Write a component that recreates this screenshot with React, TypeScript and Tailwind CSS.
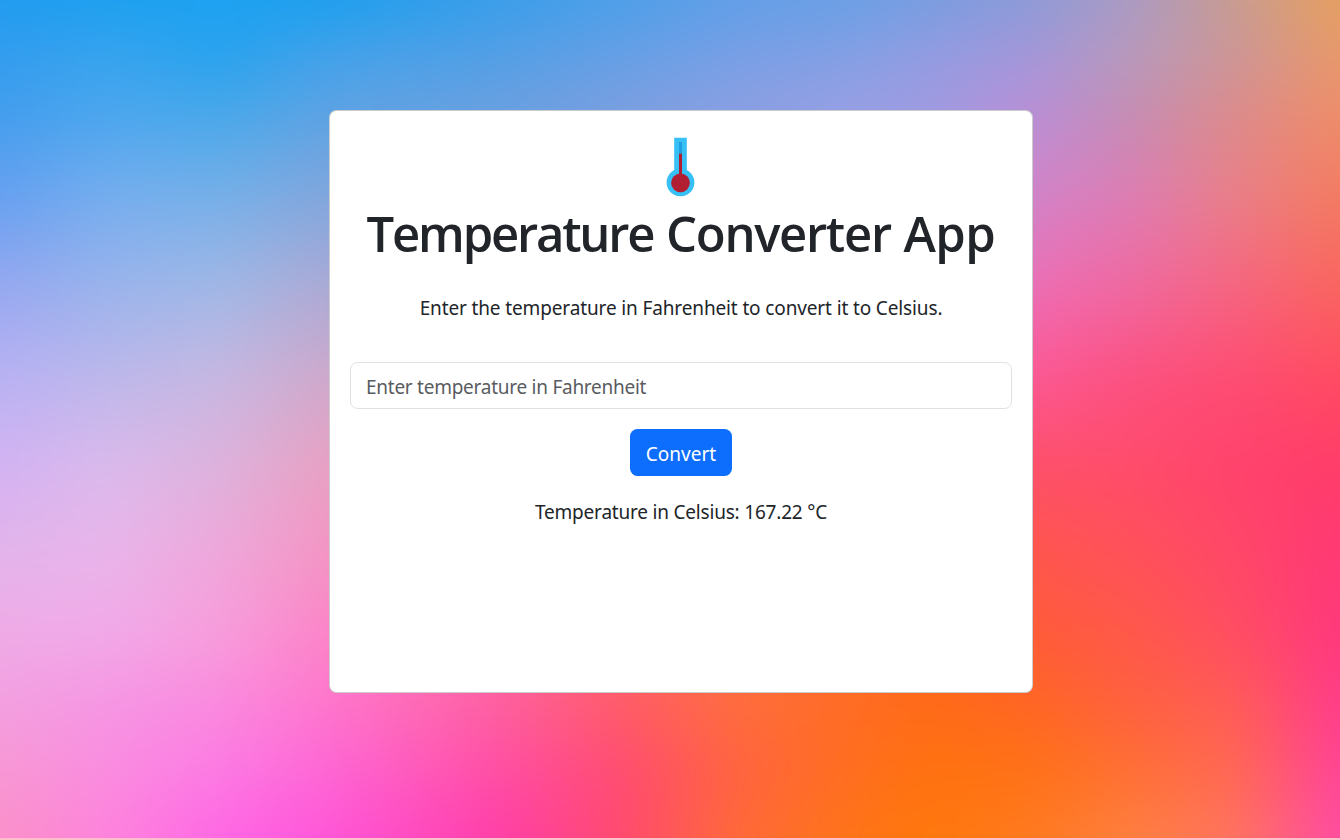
import React, { useState } from "react";

const XS = [0, 110, 220, 330, 500, 620, 740, 850, 930, 1030, 1130, 1235, 1340];

// Colour mesh: left four columns, middle five, right four.
const TOP = ["#6aa0e0", "#7a9fe0", "#8c9fe2", "#989fe4", "#9f9ae0"];
const BOTTOM = ["#fe68a4", "#ff6070", "#ff6e48", "#ff6c2c", "#ff681e"];
const ROWS: { y: number; colors: string[] }[] = [
  { y: 0, colors: ["#209cf0", "#1ca0f0", "#1ca2f2", "#1c9fee", "#3a9eea", "#4c9fe9", "#629fe7", "#6a9fe6", "#789de0", "#8c9bd8", "#aa9ac4", "#c89c90", "#e6a060"] },
  { y: 55, colors: ["#349cee", "#38a4ee", "#28a2ee", "#44a2ea", "#539fe6", "#66a0e6", "#78a0e6", "#84a0e4", "#949ce2", "#a496da", "#b89abc", "#cc9698", "#e8986a"] },
  { y: 110, colors: ["#429eee", "#4aa6ee", "#46a8ea", "#5ca2e4", ...TOP, "#b890d8", "#c48eb4", "#dc8c8c", "#ee8e6a"] },
  { y: 200, colors: ["#68a0f0", "#78aeee", "#78b0e8", "#84a6dc", ...TOP, "#d482c8", "#de7cb4", "#ea7e88", "#f47a60"] },
  { y: 290, colors: ["#98a8f0", "#9cb4ec", "#a2b8e6", "#b0aad4", ...TOP, "#f06cb4", "#f068a0", "#f66480", "#fa645e"] },
  { y: 380, colors: ["#bab2f4", "#beb8ea", "#c8b8e2", "#d0a8ca", "#d0a8ca", "#d0a8ca", "#fc5894", "#fc5894", "#fc5894", "#fc5894", "#fc5080", "#fe4c72", "#ff4a62"] },
  { y: 470, colors: ["#d4b2f2", "#dcbaec", "#deb2dc", "#eaa0c2", "#eaa0c2", "#eaa0c2", "#fe5068", "#fe5068", "#fe5068", "#fe5068", "#ff4c6a", "#ff426c", "#ff3c6a"] },
  { y: 560, colors: ["#e4b4ea", "#eab4ea", "#f0a6da", "#f494c4", ...BOTTOM, "#ff564c", "#ff5258", "#ff4868", "#ff3876"] },
  { y: 640, colors: ["#f0aae6", "#f2a8e8", "#f89cdc", "#fc82c8", ...BOTTOM, "#ff5c38", "#ff5a48", "#ff4e62", "#ff387e"] },
  { y: 700, colors: ["#f2a0e0", "#f696e4", "#fa8ade", "#fe76cc", "#fe60a0", "#ff5c68", "#ff6e3c", "#ff6c24", "#ff6a18", "#ff6624", "#ff6040", "#ff5c58", "#ff3c8a"] },
  { y: 770, colors: ["#f898d4", "#fa8ce0", "#fc7ae4", "#fe66d4", "#ff4ea4", "#ff4c72", "#ff6440", "#ff6e20", "#ff7210", "#ff7216", "#ff7034", "#ff6854", "#ff4498"] },
  { y: 838, colors: ["#fa90c8", "#fe82dc", "#ff66e4", "#ff54d8", "#ff3ea8", "#ff4a70", "#ff6a38", "#ff7418", "#ff780c", "#ff7a20", "#ff8040", "#ff7460", "#ff4ca4"] },
];

function Backdrop() {
  return (
    <svg className="absolute inset-0 h-full w-full" viewBox="0 0 1340 838" preserveAspectRatio="none" aria-hidden="true">
      <defs>
        <filter id="soften" filterUnits="userSpaceOnUse" x="-100" y="-100" width="1540" height="1038" colorInterpolationFilters="sRGB">
          <feGaussianBlur stdDeviation="22" />
        </filter>
        {ROWS.map((r, i) => (
          <linearGradient key={i} id={`row${i}`} gradientUnits="userSpaceOnUse" x1="0" x2="1340" y1="0" y2="0">
            {r.colors.map((c, j) => (
              <stop key={j} offset={XS[j] / 1340} stopColor={c} />
            ))}
          </linearGradient>
        ))}
        {ROWS.slice(1).map((r, i) => (
          <React.Fragment key={i}>
            <linearGradient id={`fade${i + 1}`} gradientUnits="userSpaceOnUse" x1="0" x2="0" y1={ROWS[i].y} y2={r.y}>
              <stop offset="0" stopColor="#fff" stopOpacity="0" />
              <stop offset="1" stopColor="#fff" />
            </linearGradient>
            <mask id={`mask${i + 1}`} maskUnits="userSpaceOnUse" x="-100" y="-100" width="1540" height="1038">
              <rect x="-100" y={ROWS[i].y} width="1540" height={938 - ROWS[i].y} fill={`url(#fade${i + 1})`} />
            </mask>
          </React.Fragment>
        ))}
      </defs>
      <g filter="url(#soften)">
        {ROWS.map((_, i) => (
          <rect key={i} x="-100" y="-100" width="1540" height="1038" fill={`url(#row${i})`} mask={i ? `url(#mask${i})` : undefined} />
        ))}
      </g>
    </svg>
  );
}

function Thermometer() {
  return (
    <svg width="62" height="62" viewBox="0 0 62 62" className="shrink-0" aria-hidden="true">
      <path d="M24.2 1.7h12.6v32.3a13.9 13.9 0 1 1-12.6 0z" fill="#36c0f5" />
      <rect x="29" y="6" width="3" height="12" fill="#1f9fe0" />
      <rect x="29" y="17.7" width="3" height="24" fill="#b02032" />
      <circle cx="30.5" cy="46.8" r="9.4" fill="#b02032" />
    </svg>
  );
}

export default function App() {
  const [value, setValue] = useState("");
  const [celsius, setCelsius] = useState("167.22");
  const convert = () => {
    const f = parseFloat(value);
    if (!Number.isNaN(f)) setCelsius((((f - 32) * 5) / 9).toFixed(2));
  };
  return (
    <div className="relative isolate h-[838px] overflow-hidden font-['Noto_Sans','Open_Sans',sans-serif] text-[19px] leading-[30px] text-[#212529]">
      <Backdrop />
      <main className="relative mt-[110px] ml-[329px] flex h-[583px] w-[704px] flex-col items-center rounded-[7.5px] border border-black/20 bg-white bg-clip-border px-5 pt-[25px]">
        <Thermometer />
        <h1 className="mt-[5px] font-['Open_Sans','Noto_Sans',sans-serif] text-[49px] leading-[60px] font-semibold whitespace-nowrap">
          <span className="tracking-[-2.2px]">Temperature</span> <span className="tracking-[-1.3px]">Converter</span>{" "}
          <span className="tracking-[-0.5px]">App</span>
        </h1>
        <p className="mt-[30px] tracking-[-0.13px] whitespace-nowrap">Enter the temperature in Fahrenheit to convert it to Celsius.</p>
        <input
          value={value}
          onChange={(e) => setValue(e.target.value)}
          placeholder="Enter temperature in Fahrenheit"
          className="mt-[39px] h-[47px] w-full rounded-[7.5px] border border-[#dee2e6] bg-white px-[15px] pt-[2px] tracking-[-0.26px] outline-none placeholder:text-[#595c5f]"
        />
        <button onClick={convert} className="mt-5 h-[47px] w-[102px] rounded-[7.5px] bg-[#0d6efd] pt-[2px] text-white">
          Convert
        </button>
        <p className="mt-[21px] tracking-[-0.2px] whitespace-nowrap">Temperature in Celsius: {celsius} °C</p>
      </main>
    </div>
  );
}
